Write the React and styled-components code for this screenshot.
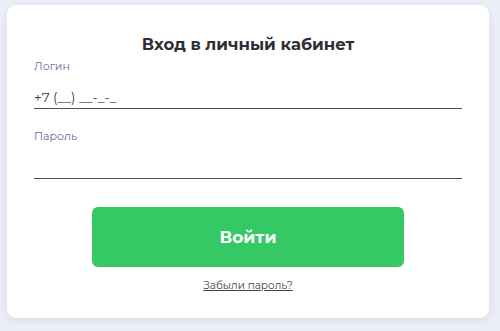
import React from "react";
import styled, { createGlobalStyle } from "styled-components";

const GlobalStyle = createGlobalStyle`
  html, body {
    margin: 0;
    padding: 0;
    background: #eceef8;
    font-family: "Montserrat", Inter, "Noto Sans", sans-serif;
  }
`;

const Page = styled.div`
  width: 500px;
  height: 331px;
  box-sizing: border-box;
  padding: 5px 11px 13px 7px;
`;

const Card = styled.form`
  height: 100%;
  box-sizing: border-box;
  background: #fff;
  border-radius: 9px;
  box-shadow: 0 2px 8px rgba(120, 125, 170, 0.18);
  padding: 29px 27px 0 27px;
  display: flex;
  flex-direction: column;
`;

const Title = styled.h1`
  margin: 0;
  text-align: center;
  font-size: 16.5px;
  font-weight: 700;
  color: #2e2e35;
  line-height: 20px;
`;

const Field = styled.label`
  display: flex;
  flex-direction: column;
  margin-top: ${(p) => p.$top}px;
`;

const Label = styled.span`
  font-size: 11px;
  color: #6c6a98;
  line-height: 14px;
`;

const Input = styled.input`
  box-sizing: border-box;
  border: none;
  border-bottom: 1.5px solid #4f4e68;
  outline: none;
  padding: 12px 0 0 0;
  height: 36px;
  font-family: inherit;
  font-size: 13.5px;
  color: #2e2e35;
  background: transparent;
  &::placeholder {
    color: #3a3a42;
  }
`;

const Actions = styled.div`
  display: flex;
  flex-direction: column;
  align-items: center;
  margin-top: 28px;
`;

const Button = styled.button`
  width: 312px;
  height: 60px;
  border: none;
  border-radius: 6px;
  background: #35c966;
  color: #fff;
  font-family: inherit;
  font-size: 17px;
  font-weight: 700;
  cursor: pointer;
`;

const Forgot = styled.a`
  margin-top: 12px;
  font-size: 10.5px;
  color: #45454f;
  text-decoration: underline;
`;

export default function App() {
  return (
    <>
      <GlobalStyle />
      <Page>
        <Card onSubmit={(e) => e.preventDefault()}>
          <Title>Вход в личный кабинет</Title>
          <Field $top={5}>
            <Label>Логин</Label>
            <Input placeholder="+7 (__) __-_-_" />
          </Field>
          <Field $top={20}>
            <Label>Пароль</Label>
            <Input type="password" />
          </Field>
          <Actions>
            <Button type="submit">Войти</Button>
            <Forgot href="#">Забыли пароль?</Forgot>
          </Actions>
        </Card>
      </Page>
    </>
  );
}
